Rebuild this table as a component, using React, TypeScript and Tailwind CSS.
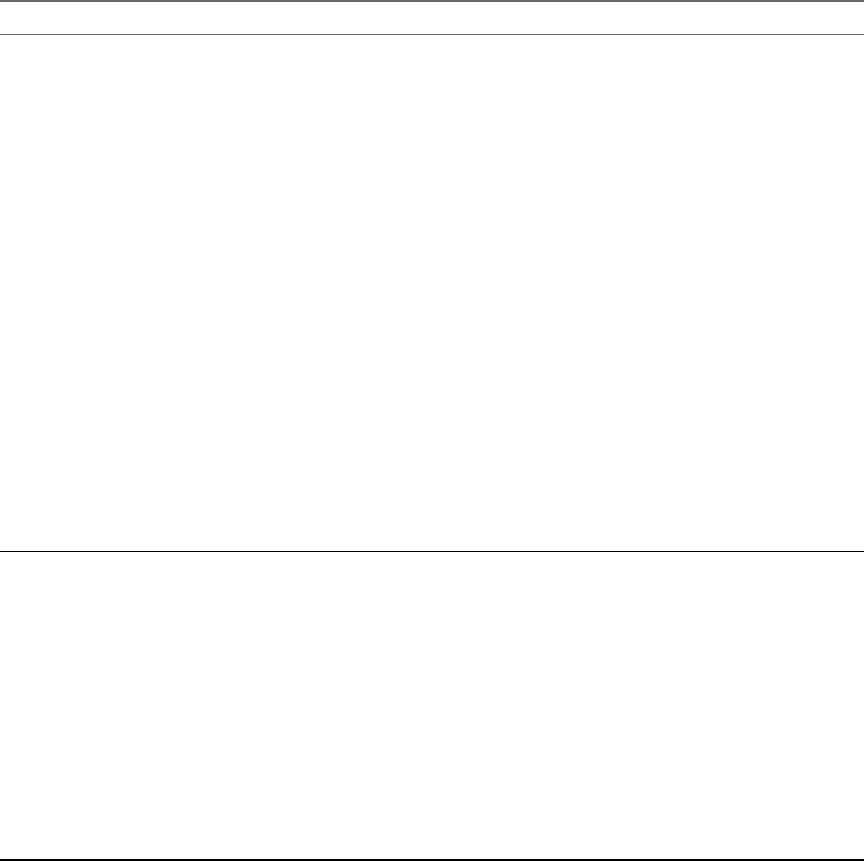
export default function App() {
  const cols = ['', ''];
  return (
    <div className="w-[864px] bg-white font-['Liberation_Sans',sans-serif]">
      <div className="grid grid-cols-[339px_525px]">
        {cols.map((c, i) => (
          <div key={'h' + i} className="h-[35px] border-t-2 border-b border-[#666666] text-sm">
            {c}
          </div>
        ))}
        {cols.map((c, i) => (
          <div key={'a' + i} className="h-[517px] border-b border-black">
            {c}
          </div>
        ))}
        {cols.map((c, i) => (
          <div key={'b' + i} className="h-[309px] border-b-2 border-black">
            {c}
          </div>
        ))}
      </div>
    </div>
  );
}
